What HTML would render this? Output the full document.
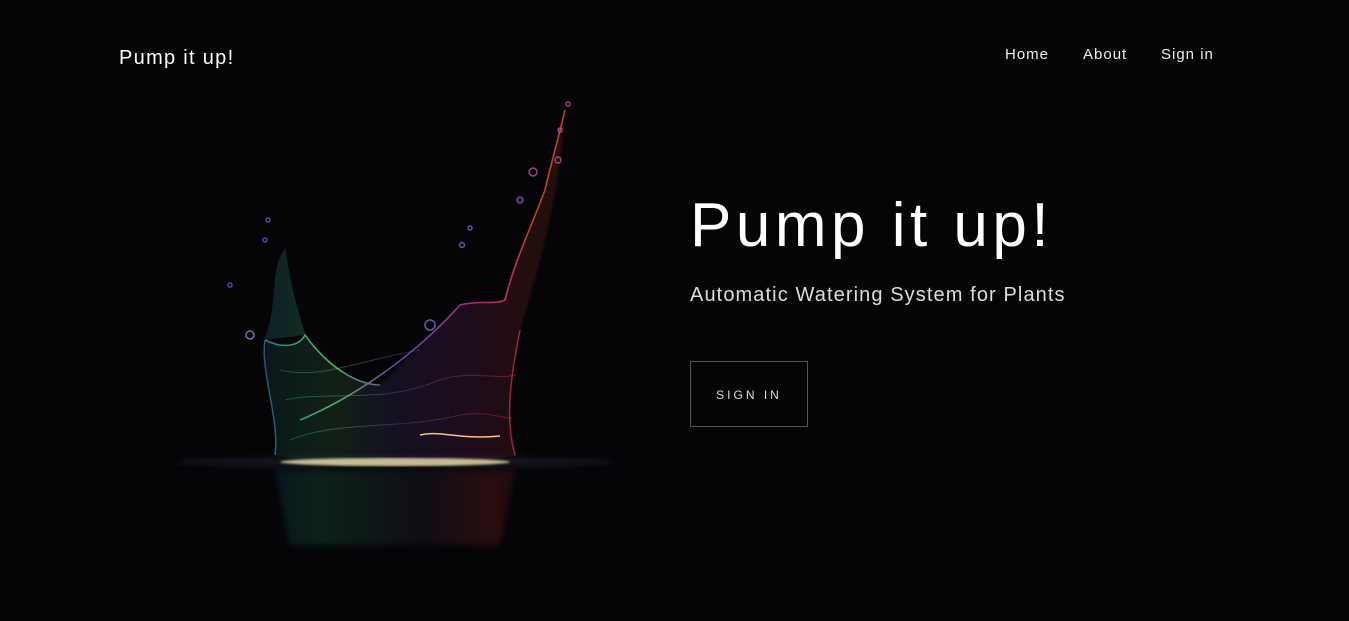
<!DOCTYPE html>
<html><head><meta charset="utf-8"><style>
html,body{margin:0;padding:0;width:1349px;height:621px;overflow:hidden;background:#050508;font-family:"Liberation Sans",sans-serif;color:#fff}
.brand{position:absolute;left:119px;top:47px;font-size:20px;letter-spacing:1.3px}
.nav{position:absolute;top:46px;font-size:15px;color:#eee;letter-spacing:1px}
h1{position:absolute;left:690px;top:190px;margin:0;font-weight:normal;font-size:62px;letter-spacing:4.5px}
.sub{position:absolute;left:690px;top:284px;font-size:20px;color:#ddd;letter-spacing:1.1px}
.btn{position:absolute;left:690px;top:361px;width:118px;height:66px;border:1px solid #555;box-sizing:border-box;font-size:12px;letter-spacing:3px;color:#ddd;text-align:center;line-height:66px}
svg{position:absolute;left:0;top:0}
</style></head><body>
<svg width="700" height="621" viewBox="0 0 700 621">
<defs>
<linearGradient id="g" x1="250" y1="0" x2="540" y2="0" gradientUnits="userSpaceOnUse">
<stop offset="0" stop-color="#3a6cc0"/><stop offset="0.15" stop-color="#3fb98a"/><stop offset="0.3" stop-color="#6fd07a"/><stop offset="0.5" stop-color="#7a5ac8"/><stop offset="0.75" stop-color="#c03a9a"/><stop offset="0.9" stop-color="#e8405a"/><stop offset="1" stop-color="#e65030"/>
</linearGradient>
<linearGradient id="r" x1="250" y1="0" x2="540" y2="0" gradientUnits="userSpaceOnUse">
<stop offset="0" stop-color="#2050a0"/><stop offset="0.25" stop-color="#30a060"/><stop offset="0.6" stop-color="#403050"/><stop offset="0.85" stop-color="#d03030"/><stop offset="1" stop-color="#301010"/>
</linearGradient>
<filter id="b"><feGaussianBlur stdDeviation="3"/></filter>
<filter id="b2"><feGaussianBlur stdDeviation="1"/></filter>
</defs>
<ellipse cx="395" cy="462" rx="220" ry="6" fill="#223" filter="url(#b)" opacity="0.5"/>
<path d="M275 470 L515 470 L500 545 L290 545 Z" fill="url(#r)" opacity="0.18" filter="url(#b)"/>
<path d="M265 340 C285 350 300 345 305 335 C330 370 360 385 380 385 C410 360 440 320 460 305 C480 300 495 305 505 300 C515 260 530 230 545 190 C552 160 558 140 565 110 C560 200 535 280 520 330 C510 380 505 420 515 455 C460 470 330 470 275 455 C280 420 260 370 265 340 Z" fill="url(#g)" opacity="0.13" filter="url(#b2)"/>
<path d="M265 340 C285 350 300 345 305 335 C330 370 360 385 380 385 M300 420 C360 395 420 350 460 305 C480 300 495 305 505 300 C515 260 530 230 545 190 C552 160 558 140 565 110" stroke="url(#g)" stroke-width="1.6" fill="none" opacity="0.8"/>
<path d="M265 340 C280 300 270 270 285 250 C290 290 300 320 305 335" stroke="url(#g)" stroke-width="1.5" fill="url(#g)" opacity="0.2"/>
<path d="M520 330 C510 380 505 420 515 455 M275 455 C280 420 260 370 265 340" stroke="url(#g)" stroke-width="1.5" fill="none" opacity="0.6"/>
<g stroke="url(#g)" stroke-width="1" fill="none" opacity="0.35">
<path d="M290 440 C340 420 400 430 460 415 C490 410 505 420 512 418"/>
<path d="M285 400 C330 390 380 405 440 380 C470 370 500 380 515 375"/>
<path d="M280 370 C320 380 360 360 420 350"/>
</g>
<ellipse cx="395" cy="462" rx="115" ry="4" fill="#efe3b0" opacity="0.8" filter="url(#b2)"/>
<path d="M280 462 L330 462" stroke="#6fe080" stroke-width="4" opacity="0.7" filter="url(#b2)"/>
<path d="M470 458 L512 458" stroke="#ff6a30" stroke-width="4" opacity="0.7" filter="url(#b2)"/>
<path d="M420 435 C440 430 460 440 500 436" stroke="#f5c090" stroke-width="1.5" fill="none"/>
<g fill="none" stroke-width="1.5" opacity="0.8">
<circle cx="230" cy="285" r="2" stroke="#5a5ad0"/><circle cx="268" cy="220" r="2" stroke="#5a5ad0"/><circle cx="265" cy="240" r="2" stroke="#5a5ad0"/>
<circle cx="462" cy="245" r="2.5" stroke="#8060d0"/><circle cx="470" cy="228" r="2" stroke="#8060d0"/><circle cx="520" cy="200" r="3" stroke="#b050c0"/><circle cx="533" cy="172" r="4" stroke="#c050a0"/><circle cx="558" cy="160" r="3" stroke="#c050a0"/><circle cx="560" cy="130" r="2" stroke="#c050a0"/><circle cx="568" cy="104" r="2" stroke="#c050a0"/><circle cx="250" cy="335" r="4" stroke="#8090d0"/><circle cx="430" cy="325" r="5" stroke="#8070d0"/>
</g>
</svg>
<div class="brand">Pump it up!</div>
<div class="nav" style="left:1005px">Home</div>
<div class="nav" style="left:1083px">About</div>
<div class="nav" style="left:1161px">Sign in</div>
<h1>Pump it up!</h1>
<div class="sub">Automatic Watering System for Plants</div>
<div class="btn">SIGN IN</div>
</body></html>
